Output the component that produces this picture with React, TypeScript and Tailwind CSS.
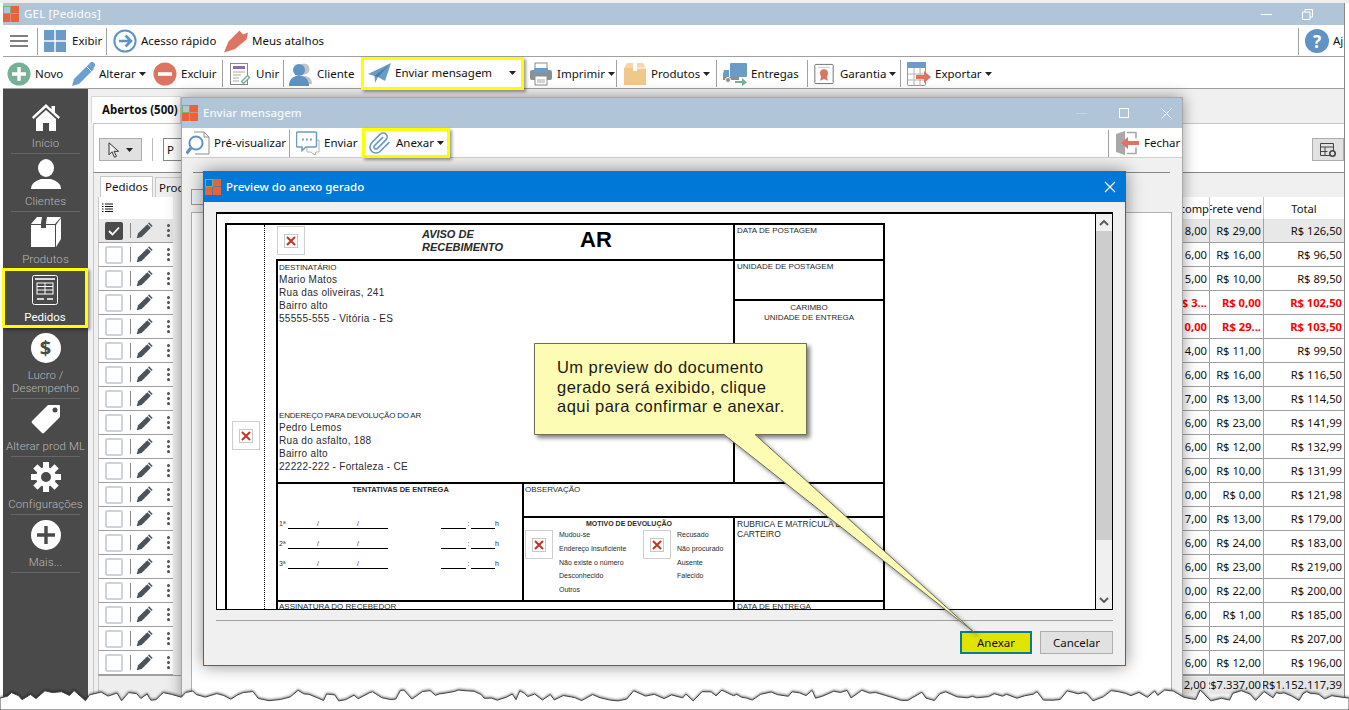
import React from "react";

const Logo = () => (
  <svg width="16" height="16" viewBox="0 0 16 16" className="shrink-0">
    <rect x="0.5" y="0.5" width="7" height="7" fill="none" stroke="#7fae7a" />
    <rect x="8" y="0" width="8" height="7.5" fill="#e8623a" />
    <rect x="0" y="8" width="7.5" height="8" fill="#e8623a" />
    <rect x="8" y="8" width="8" height="8" fill="#e8623a" />
  </svg>
);

const S = ({ children, w = 24, h = 24, cls = "" }: { children: React.ReactNode; w?: number; h?: number; cls?: string }) => (
  <svg width={w} height={h} viewBox="0 0 24 24" className={"shrink-0 " + cls}>{children}</svg>
);

const IconNovo = () => <S><circle cx="12" cy="12" r="11.5" fill="#75b295" /><path d="M12 5v14M5 12h14" stroke="#fff" strokeWidth="3.4" /></S>;
const IconExcluir = () => <S><circle cx="12" cy="12" r="11.5" fill="#dd7461" /><path d="M5 12h14" stroke="#fff" strokeWidth="3.6" /></S>;
const IconPencil = () => <S><path d="M1 24l2-7L18 2l5 5L8 22z" fill="#6a9fd2" /><path d="M18 2l1.5-1.5a2 2 0 0 1 3 0l1 1a2 2 0 0 1 0 3L22 7z" fill="#6a9fd2" /><path d="M15.5 4.5l5 5" stroke="#fff" strokeWidth="1" /></S>;
const IconUnir = () => (
  <S>
    <rect x="2.5" y="1.5" width="17" height="21" fill="#fff" stroke="#8a8a8a" />
    <rect x="5" y="4" width="12" height="3" fill="#8f6bb0" />
    <path d="M5 10h12M5 13h8M5 16h6M5 19h6" stroke="#a9a9a9" />
    <path d="M14 21l7-7" stroke="#75b295" strokeWidth="4" />
    <path d="M15 20l5-5" stroke="#fff" strokeWidth="1.4" />
  </S>
);
const IconCliente = () => (
  <S>
    <circle cx="15" cy="7" r="5.5" fill="#c4c4c4" />
    <path d="M8 22c0-6 3-8 7-8s8 2 8 8z" fill="#c4c4c4" />
    <circle cx="10" cy="8" r="6" fill="#5f93c4" />
    <path d="M0 24c0-7 4-9 7-10h6c3 1 7 3 7 10z" fill="#5f93c4" />
  </S>
);
const IconPlane = () => <S><path d="M1 13L24 2 18 20 11 16 8 22 7.5 15z" fill="#6b9bc7" /><path d="M7.5 15L22 4 11 16" fill="#447bad" /></S>;
const IconPrinter = () => (
  <S>
    <rect x="6" y="1" width="12" height="9" fill="#fff" stroke="#8c8c8c" />
    <rect x="1" y="8" width="22" height="10" rx="2" fill="#8d9092" />
    <rect x="5" y="6" width="14" height="5" rx="1" fill="#6b9bc7" />
    <rect x="6" y="14" width="12" height="9" fill="#fff" stroke="#8c8c8c" />
    <path d="M8 18h8M8 20h8" stroke="#aaa" />
  </S>
);
const IconBox = () => <S><path d="M1 6h22v17H1z" fill="#f0c88a" /><path d="M1 6l3-5h6v5zM14 6V1h6l3 5z" fill="#f5d7a6" /><path d="M10 1h4v8h-4z" fill="#fff" /><path d="M14 6h9" stroke="#fff" /></S>;
const IconTruck = () => (
  <S>
    <rect x="7" y="1" width="17" height="14" rx="1" fill="#6b9bc7" />
    <path d="M1 8h5v9H0v-5z" fill="#6b9bc7" />
    <rect x="0" y="15" width="16" height="3" fill="#8d9092" />
    <circle cx="5" cy="18" r="2.5" fill="#8d9092" stroke="#fff" />
    <path d="M12 19h7v-3l5 4.5-5 3.5v-3h-7z" fill="#75b295" />
  </S>
);
const IconGarantia = () => (
  <S w={20} h={24}>
    <rect x="1" y="0.5" width="22" height="23" rx="1" fill="#fff" stroke="#777" strokeWidth="1.2" />
    <path d="M5 4h14" stroke="#bbb" />
    <circle cx="12" cy="11" r="4.8" fill="#dd7461" />
    <path d="M8.5 14l-1 6 4.5-2 4.5 2-1-6z" fill="#dd7461" />
  </S>
);
const IconExportar = () => (
  <S>
    <rect x="0.5" y="0.5" width="18" height="23" rx="1" fill="#fff" stroke="#999" />
    <rect x="0" y="0" width="19" height="6" rx="1" fill="#6b9bc7" />
    <path d="M1 12h17M1 18h17M7 6v18M13 6v18" stroke="#b4b4b4" />
    <path d="M9 13h8V9l7 6-7 6v-4H9z" fill="#dd7461" />
  </S>
);
const IconGrid = () => <S w={22} h={22}><rect x="0" y="0" width="11.2" height="11.2" fill="#6b9bc7" /><rect x="12.8" y="0" width="11.2" height="11.2" fill="#6b9bc7" /><rect x="0" y="12.8" width="11.2" height="11.2" fill="#6b9bc7" /><rect x="12.8" y="12.8" width="11.2" height="11.2" fill="#6b9bc7" /></S>;
const IconAcesso = () => <S><circle cx="12" cy="12" r="10.6" fill="#fff" stroke="#5f93c4" strokeWidth="2" /><path d="M6 12h11M12.5 6.5L18 12l-5.5 5.5" fill="none" stroke="#5f93c4" strokeWidth="2.6" /></S>;
const IconAtalho = () => <S><path d="M0 23.5L4.500 12.500 15.500 1.500 19 5.500 24 3.500 22.500 10.500 11 20z" fill="#dd7461" /></S>;
const IconHelp = () => <S><circle cx="12" cy="12" r="12" fill="#5f93c4" /></S>;
const IconPreview = () => (
  <S>
    <path d="M8 1h10l5 5v17H9" fill="#fff" stroke="#8d8d8d" />
    <path d="M18 1v5h5" fill="none" stroke="#8d8d8d" />
    <circle cx="10" cy="12" r="6.6" fill="#fff" stroke="#5f93c4" strokeWidth="2" />
    <path d="M5 17l-4.5 5.5" stroke="#5f93c4" strokeWidth="3.2" />
  </S>
);
const IconChat = () => (
  <S>
    <path d="M11 9h12v12h-3l-1 3-4-3h-4z" fill="#fff" stroke="#b5b5b5" />
    <path d="M1.5 1h18a1 1 0 0 1 1 1v13a1 1 0 0 1-1 1H10l-4 3.5V16H1.5a1 1 0 0 1-1-1V2a1 1 0 0 1 1-1z" fill="#fff" stroke="#6b9bc7" strokeWidth="1.5" />
    <path d="M6 8.5h1.8M10 8.5h1.8M14 8.5h1.8" stroke="#6b9bc7" strokeWidth="2" />
  </S>
);
const IconClip = () => (
  <S>
    <path d="M21.4 11.05l-9.2 9.19a6 6 0 0 1-8.49-8.49l8.57-8.57A4 4 0 1 1 18 8.84l-8.59 8.57a2 2 0 0 1-2.83-2.83l8.49-8.48" fill="none" stroke="#6b9bc7" strokeWidth="1.7" />
  </S>
);
const IconFechar = () => (
  <S>
    <path d="M0 3l9-3v24l-9-3z" fill="#a8a8a8" />
    <path d="M11 1.5h9v6M20 16.5v6h-9" fill="none" stroke="#a8a8a8" strokeWidth="1.6" />
    <path d="M23 10h-11V6l-7 6 7 6v-4h11z" fill="#dd7461" />
  </S>
);

const ListPencil = () => (
  <svg width="17" height="17" viewBox="0 0 24 24" className="shrink-0">
    <path d="M1 23l2-7L16 3l5 5L8 21z" fill="#4c525b" />
    <path d="M17 2l1.5-1.5 5 5L22 7z" fill="#4c525b" />
  </svg>
);
const Dots = () => (
  <div className="flex flex-col gap-[2px] shrink-0">
    <div className="w-[3px] h-[3px] bg-[#4c525b] rounded-full" />
    <div className="w-[3px] h-[3px] bg-[#4c525b] rounded-full" />
    <div className="w-[3px] h-[3px] bg-[#4c525b] rounded-full" />
  </div>
);

const Caret = ({ cls = "ml-[3px]" }: { cls?: string }) => (
  <svg width="7" height="4" viewBox="0 0 7 4" className={"shrink-0 " + cls}><path d="M0 0h7L3.5 4z" fill="#222" /></svg>
);
const Sep = ({ cls = "mr-[6px]" }: { cls?: string }) => <div className={"w-px h-[27px] bg-[#a0a0a0] shrink-0 " + cls} />;

const Tool = ({ cls, icon, label, caret, gap = "gap-[4px]" }: { cls: string; icon: React.ReactNode; label: string; caret?: boolean; gap?: string }) => (
  <div className={"flex items-center shrink-0 " + cls}>
    <div className={"flex items-center " + gap}>
      {icon}
      <span className="whitespace-nowrap">{label}</span>
    </div>
    {caret && <Caret />}
  </div>
);

const RedX = () => (
  <div className="w-[28px] h-[29px] border border-[#cfcfcf] flex items-center justify-center bg-white shrink-0">
    <div className="w-[14px] h-[14px] border border-[#c9c9c9] flex items-center justify-center">
      <svg width="10" height="10" viewBox="0 0 10 10"><path d="M1 1l8 8M9 1l-8 8" stroke="#c8321f" strokeWidth="2" /></svg>
    </div>
  </div>
);

const rows: [string, string, string, boolean?][] = [
  ["R$ 8,00", "R$ 29,00", "R$ 126,50"],
  ["R$ 6,00", "R$ 16,00", "R$ 96,50"],
  ["R$ 5,00", "R$ 10,00", "R$ 89,50"],
  ["R$ 3...", "R$ 0,00", "R$ 102,50", true],
  ["R$ 0,00", "R$ 29...", "R$ 103,50", true],
  ["R$ 4,00", "R$ 11,00", "R$ 99,50"],
  ["R$ 6,00", "R$ 16,00", "R$ 116,50"],
  ["R$ 7,00", "R$ 13,00", "R$ 114,50"],
  ["R$ 6,00", "R$ 23,00", "R$ 141,99"],
  ["R$ 6,00", "R$ 12,00", "R$ 132,99"],
  ["R$ 6,00", "R$ 10,00", "R$ 131,99"],
  ["R$ 0,00", "R$ 0,00", "R$ 121,98"],
  ["R$ 7,00", "R$ 13,00", "R$ 179,00"],
  ["R$ 6,00", "R$ 24,00", "R$ 183,00"],
  ["R$ 6,00", "R$ 23,00", "R$ 219,00"],
  ["R$ 0,00", "R$ 22,00", "R$ 200,00"],
  ["R$ 6,00", "R$ 1,00", "R$ 185,00"],
  ["R$ 5,00", "R$ 24,00", "R$ 207,00"],
  ["R$ 6,00", "R$ 12,00", "R$ 196,00"],
];

const Nav = ({ icon, label, h = "h-[55px]" }: { icon: React.ReactNode; label: string; h?: string }) => (
  <div className={"flex flex-col items-center shrink-0 " + h}>
    <div className="h-[33px] flex items-end justify-center">{icon}</div>
    <div className="text-center leading-[13px] mt-[6px] whitespace-nowrap font-['Roboto',sans-serif] text-[11.5px] text-[#b8b8b8] font-light tracking-[0.1px]">{label}</div>
  </div>
);
const NavLine = () => <div className="h-px bg-[#666] mx-[8px] shrink-0" />;

function tornPath() {
  let d = "M0 30 L0 18";
  let seed = 7;
  let x = 0;
  while (x < 1349) {
    seed = (seed * 9301 + 49297) % 233280;
    const r = seed / 233280;
    seed = (seed * 9301 + 49297) % 233280;
    const r2 = seed / 233280;
    x += 3 + r * 9;
    const y = 10 + r2 * 11;
    d += ` L${x.toFixed(1)} ${y.toFixed(1)}`;
  }
  return d + " L1349 30 Z";
}

export default function App() {
  return (
    <div className="relative w-[1349px] h-[710px] bg-white overflow-hidden font-['Noto_Sans',sans-serif] text-[11.5px] text-[#111]">
      <div className="absolute left-0 top-0 w-full h-[3px] bg-[#eeeeee]" />
      {/* Main application window */}
      <div className="absolute left-[3px] top-[3px] w-[1342px] h-[704px] flex flex-col border-r border-[#8a8a8a] bg-[#f0f0f0]">
        <div className="h-[22px] bg-[#b0c6d8] flex items-center shrink-0 relative">
          <Logo />
          <span className="ml-[5px] text-white tracking-[0.2px]">GEL [Pedidos]</span>
          <div className="ml-auto mr-[31px] flex items-center gap-[30px]">
            <div className="w-[11px] h-px bg-white" />
            <svg width="11" height="11" viewBox="0 0 11 11"><path d="M0.5 3h7.5v7.5H0.5zM3 3V0.5h7.5V8H8" fill="none" stroke="#fff" /></svg>
          </div>
        </div>

        <div className="h-[32px] bg-white border-b border-[#a0a0a0] flex items-center shrink-0 pt-[1px]">
          <svg width="18" height="12" viewBox="0 0 18 12" className="ml-[7px] mr-[9px] shrink-0"><path d="M0 1h18M0 6h18M0 11h18" stroke="#555" strokeWidth="1.6" /></svg>
          <Sep />
          <Tool cls="w-[62px]" icon={<IconGrid />} label="Exibir" gap="gap-[6px]" />
          <Sep />
          <Tool cls="w-[111px]" icon={<IconAcesso />} label="Acesso rápido" />
          <Tool cls="w-[100px]" icon={<IconAtalho />} label="Meus atalhos" />
          <div className="ml-auto flex items-center">
            <Sep />
            <div className="relative w-[24px] h-[24px] shrink-0">
              <IconHelp />
              <span className="absolute inset-0 flex items-center justify-center text-white font-bold text-[17px] leading-none">?</span>
            </div>
            <span className="ml-[4px] w-[11px] whitespace-nowrap">Aj</span>
          </div>
        </div>

        <div className="h-[32px] bg-white border-b border-[#a0a0a0] flex items-center shrink-0 pl-[4px] pt-[2px]">
          <Tool cls="w-[64px]" icon={<IconNovo />} label="Novo" />
          <Tool cls="w-[82px]" icon={<IconPencil />} label="Alterar" caret />
          <Tool cls="w-[69px]" icon={<IconExcluir />} label="Excluir" />
          <Sep cls="mr-[5px]" />
          <Tool cls="w-[55px]" icon={<IconUnir />} label="Unir" />
          <Sep cls="mr-[5px]" />
          <Tool cls="w-[72px]" icon={<IconCliente />} label="Cliente" />
          <div className="w-[163px] h-[33px] -mt-[1px] border-[3px] border-[#ffff00] flex items-center pl-[3px] shrink-0 relative z-10 shadow-[2px_2px_3px_rgba(0,0,0,0.4)] bg-white">
            <IconPlane />
            <span className="ml-[4px] whitespace-nowrap">Enviar mensagem</span>
            <Caret cls="ml-[17px]" />
          </div>
          <Tool cls="w-[87px] ml-[5px]" icon={<IconPrinter />} label="Imprimir" caret />
          <Sep />
          <Tool cls="w-[93px]" icon={<IconBox />} label="Produtos" caret />
          <Sep />
          <Tool cls="w-[84px]" icon={<IconTruck />} label="Entregas" />
          <Sep />
          <Tool cls="w-[86px]" icon={<IconGarantia />} label="Garantia" caret gap="gap-[6px]" />
          <Sep />
          <Tool cls="w-[90px]" icon={<IconExportar />} label="Exportar" caret />
        </div>

        <div className="flex-1 flex min-h-0">
          {/* Sidebar */}
          <div className="w-[85px] bg-[#4a4a4a] flex flex-col shrink-0 pt-[9px]">
            <Nav label="Início" icon={
              <svg width="28" height="28" viewBox="0 0 28 28"><path d="M14 1L0 14l1.5 2L14 4.5 26.500 16l1.500-2-5-4.500V3h-3.500v3.300z" fill="#fff" /><path d="M14 7L4 16v12h7v-8h6v8h7V16z" fill="#fff" /></svg>
            } />
            <NavLine />
            <div className="h-[2px]" />
            <Nav label="Clientes" icon={
              <svg width="30" height="30" viewBox="0 0 30 30"><ellipse cx="15" cy="9" rx="8" ry="9" fill="#fff" /><path d="M0 30c0-6 5-8 10-10h10c5 2 10 4 10 10z" fill="#fff" /></svg>
            } />
            <NavLine />
            <div className="h-[2px]" />
            <Nav h="h-[54px]" label="Produtos" icon={
              <svg width="30" height="30" viewBox="0 0 30 30"><path d="M0 8h24v22H0z" fill="#fff" /><path d="M0 7l6-7h24l-6 7z" fill="#fff" /><path d="M25 8l5-7v21l-5 8z" fill="#fff" /><path d="M11 0h5l-1 6v5h-5V6z" fill="#4a4a4a" /></svg>
            } />
            <div className="relative z-10 -ml-[1px] w-[86px] h-[60px] border-[3px] border-[#ffff00] flex flex-col items-center shrink-0 shadow-[2px_2px_3px_rgba(0,0,0,0.4)]">
              <div className="mt-[4px] h-[30px]">
                <svg width="26" height="30" viewBox="0 0 26 30">
                  <rect x="0.500" y="0.500" width="25" height="29" rx="2" fill="none" stroke="#fff" />
                  <path d="M3 4h20" stroke="#fff" strokeWidth="1.6" />
                  <rect x="5" y="8" width="16" height="11" fill="none" stroke="#fff" />
                  <path d="M5 11.500h16M5 15h16M13 8v11" stroke="#fff" />
                  <path d="M5 24h7M15 24h6" stroke="#fff" strokeWidth="1.500" />
                </svg>
              </div>
              <div className="mt-[5px] text-white leading-[15px] font-['Roboto',sans-serif]">Pedidos</div>
            </div>
            <div className="h-[5px]" />
            <div className="flex flex-col items-center shrink-0 h-[65px]">
              <div className="w-[30px] h-[30px] rounded-full bg-white flex items-center justify-center text-[#4a4a4a] font-bold text-[20px] leading-none">$</div>
              <div className="mt-[6px] text-center leading-[13px] text-[#b8b8b8] font-['Roboto',sans-serif] font-light">Lucro /<br />Desempenho</div>
            </div>
            <NavLine />
            <div className="h-[2px]" />
            <Nav label="Alterar prod ML" icon={
              <svg width="30" height="30" viewBox="0 0 30 30"><path d="M17 1h11a1 1 0 0 1 1 1v11L13 29a1.500 1.500 0 0 1-2 0L1 19a1.500 1.500 0 0 1 0-2z" fill="#fff" /><circle cx="24" cy="6" r="2.500" fill="#4a4a4a" /></svg>
            } />
            <NavLine />
            <div className="h-[2px]" />
            <Nav label="Configurações" icon={
              <svg width="30" height="30" viewBox="0 0 30 30">
                <g fill="#fff">
                  <circle cx="15" cy="15" r="10" />
                  <rect x="12" y="0" width="6" height="30" />
                  <rect x="12" y="0" width="6" height="30" transform="rotate(45 15 15)" />
                  <rect x="12" y="0" width="6" height="30" transform="rotate(90 15 15)" />
                  <rect x="12" y="0" width="6" height="30" transform="rotate(135 15 15)" />
                </g>
                <circle cx="15" cy="15" r="5" fill="#4a4a4a" />
              </svg>
            } />
            <NavLine />
            <div className="h-[2px]" />
            <Nav label="Mais..." icon={
              <svg width="30" height="30" viewBox="0 0 30 30"><circle cx="15" cy="15" r="15" fill="#fff" /><path d="M15 6v18M6 15h18" stroke="#4a4a4a" strokeWidth="3.400" /></svg>
            } />
            <NavLine />
          </div>

          {/* Content */}
          <div className="flex-1 min-w-0 flex flex-col pl-[5px]">
            <div className="h-[35px] flex items-end border-b border-[#c8c8c8] shrink-0">
              <div className="ml-[-2px] w-[90px] h-[27px] bg-white flex items-center pl-[10px] font-bold whitespace-nowrap overflow-hidden border border-b-0 border-[#d8d8d8]">Abertos (500)</div>
            </div>
            <div className="h-[49px] bg-white border-b border-[#888] flex items-start shrink-0 border-l border-l-[#c8c8c8] pt-[14px]">
              <div className="ml-[5px] w-[43px] h-[23px] bg-[#e1e1e1] border border-[#adadad] flex items-center justify-center gap-[5px] shrink-0">
                <svg width="13" height="16" viewBox="0 0 13 16"><path d="M1 0.800v12l3-3 2.500 5.500 2-1-2.500-5h4.500z" fill="#eee" stroke="#333" /></svg>
                <Caret cls="" />
              </div>
              <div className="ml-[10px] w-px h-[23px] bg-[#bbb]" />
              <div className="ml-[10px] w-[40px] h-[23px] border border-[#888] pl-[3px] flex items-center">P</div>
              <div className="ml-auto w-[32px] h-[23px] bg-[#e1e1e1] border border-[#adadad] flex items-center justify-center">
                <svg width="18" height="16" viewBox="0 0 18 16"><path d="M1.500 1.500h13v12h-13zM1.500 5h13M1.500 9.500h7M6 5v8.500" fill="none" stroke="#444" /><circle cx="13.500" cy="11.500" r="2.700" fill="#e1e1e1" stroke="#444" strokeWidth="1.600" /></svg>
              </div>
            </div>
            <div className="h-[24px] flex items-end shrink-0 border-l border-[#c8c8c8] pl-[6px] gap-[2px]">
              <div className="w-[53px] h-[21px] bg-white border border-b-0 border-[#c8c8c8] flex items-center justify-center">Pedidos</div>
              <div className="w-[40px] h-[20px] bg-[#f0f0f0] border border-b-0 border-[#c8c8c8] pl-[3px] flex items-center">Produtos</div>
            </div>
            <div className="flex-1 min-h-0 flex flex-col border-l border-[#c8c8c8] pl-[4px]">
              <div className="h-[22px] bg-white flex shrink-0">
                <div className="w-[75px] bg-white border-l border-[#c8c8c8] flex items-center pl-[3px] shrink-0">
                  <svg width="11" height="10" viewBox="0 0 11 10"><path d="M0 1h1.500M3 1h8M0 3.500h1.500M3 3.500h8M0 6h1.500M3 6h8M0 8.500h1.500M3 8.500h8" stroke="#111" /></svg>
                </div>
                <div className="flex-1 bg-[#f0f0f0]" />
                <div className="w-[60px] bg-white flex justify-end overflow-hidden whitespace-nowrap leading-[24px] text-[11.2px]">Frete comp</div>
                <div className="w-[54px] bg-white border-l border-[#c8c8c8] flex justify-end pr-[1px] overflow-hidden whitespace-nowrap leading-[24px] text-[11.2px]">Frete vend</div>
                <div className="w-[81px] bg-white border-l border-[#c8c8c8] text-center leading-[24px] text-[11.2px]">Total</div>
              </div>
              {rows.map((r, i) => (
                <div key={i} className="h-[24px] flex shrink-0">
                  <div className={"w-[75px] flex items-center border-l border-b border-[#c8c8c8] border-b-[#a0a0a0] pl-[6px] shrink-0 " + (i === 0 ? "bg-[#e8e8e8]" : "bg-white")}>
                    {i === 0 ? (
                      <div className="w-[18px] h-[18px] bg-[#4a4a4a] rounded-[2px] flex items-center justify-center shrink-0">
                        <svg width="12" height="10" viewBox="0 0 12 10"><path d="M1 5l3.500 3.500L11 1.500" fill="none" stroke="#fff" strokeWidth="1.800" /></svg>
                      </div>
                    ) : (
                      <div className="w-[18px] h-[18px] bg-white border-2 border-[#ced2dc] rounded-[2px] shrink-0" />
                    )}
                    <div className="ml-[7px] w-px h-[15px] bg-[#888] shrink-0" />
                    <div className="ml-[5px]"><ListPencil /></div>
                    <div className="ml-[14px]"><Dots /></div>
                  </div>
                  <div className="flex-1 bg-[#f0f0f0]" />
                  <div className={"flex text-[11.2px] leading-[23px] border-b border-[#a0a0a0] " + (i === 0 ? "bg-[#e8e8e8] " : "bg-white ") + (r[3] ? "text-[#ff0000] font-bold" : "text-[#111]")}>
                    <div className="w-[60px] text-right pr-[2px] whitespace-nowrap overflow-hidden">{r[0]}</div>
                    <div className="w-[54px] border-l border-[#a0a0a0] text-right pr-[2px] whitespace-nowrap overflow-hidden">{r[1]}</div>
                    <div className="w-[81px] border-l border-[#a0a0a0] text-right pr-[2px] whitespace-nowrap overflow-hidden">{r[2]}</div>
                  </div>
                </div>
              ))}
              <div className="h-[20px] flex shrink-0 border-t border-[#a0a0a0]">
                <div className="w-[75px] bg-[#eeeeee] border-l border-[#c8c8c8] shrink-0" />
                <div className="flex-1" />
                <div className="flex bg-[#f0f0f0] leading-[16px] text-[11.2px] pt-[1px]">
                  <div className="w-[60px] h-[17px] bg-[#e6e6e6] mr-px flex justify-end pr-[2px] whitespace-nowrap overflow-hidden">R$ 2,00</div>
                  <div className="w-[53px] h-[17px] bg-[#e6e6e6] mr-px flex justify-end pr-[1px] whitespace-nowrap overflow-hidden">R$7.337,00</div>
                  <div className="w-[81px] h-[17px] bg-[#e6e6e6] flex justify-end pr-[2px] whitespace-nowrap overflow-hidden">R$1.152.117,39</div>
                </div>
              </div>
            </div>
          </div>
        </div>
      </div>

      {/* Enviar mensagem window */}
      <div className="absolute left-[181px] top-[97px] w-[1002px] h-[606px] flex flex-col bg-[#f0f0f0] border border-[#a8a8a8] shadow-[0_0_14px_rgba(0,0,0,0.4)]">
        <div className="h-[30px] bg-[#b0c6d8] flex items-center shrink-0">
          <Logo />
          <span className="ml-[5px] text-[#f4f7fa] font-medium">Enviar mensagem</span>
          <div className="ml-auto mr-[10px] flex items-center gap-[32px]">
            <div className="w-[11px] h-px bg-[#c4d4e1]" />
            <div className="w-[10px] h-[10px] border border-white" />
            <svg width="11" height="11" viewBox="0 0 11 11"><path d="M0.500 0.500l10 10M10.500 0.500l-10 10" stroke="#fff" /></svg>
          </div>
        </div>
        <div className="h-[30px] bg-white border-b border-[#d0d0d0] flex items-center shrink-0 pl-[4px] pt-[1px]">
          <Tool cls="w-[103px]" icon={<IconPreview />} label="Pré-visualizar" />
          <Sep />
          <Tool cls="w-[66px]" icon={<IconChat />} label="Enviar" />
          <div className="w-[88px] h-[30px] border-[3px] border-[#ffff00] flex items-center pl-[3px] shrink-0 shadow-[2px_2px_3px_rgba(0,0,0,0.4)]">
            <IconClip />
            <span className="ml-[4px]">Anexar</span>
            <Caret />
          </div>
          <div className="ml-auto flex items-center">
            <Sep cls="mr-[7px]" />
            <Tool cls="w-[66px]" icon={<IconFechar />} label="Fechar" />
          </div>
        </div>
        <div className="flex-1 min-h-0 flex flex-col pl-[9px] pr-[10px]">
          <div className="h-[15px] border-b border-[#888] shrink-0 mx-[2px]" />
          <div className="h-[16px] w-[12px] mt-[16px] border border-[#999] border-r-0 shrink-0" />
          <div className="mt-[7px] flex-1 bg-white border border-[#b0b0b0]" />
        </div>
      </div>

      {/* Preview window */}
      <div className="absolute left-[203px] top-[171px] w-[923px] h-[495px] flex flex-col bg-[#f0f0f0] border border-[#0078d7] shadow-[0_0_16px_rgba(0,0,0,0.45)]">
        <div className="h-[30px] bg-[#0078d7] flex items-center shrink-0 pl-[1px]">
          <Logo />
          <span className="ml-[5px] text-white font-medium">Preview do anexo gerado</span>
          <svg width="12" height="12" viewBox="0 0 12 12" className="ml-auto mr-[9px]"><path d="M1 1l10 10M11 1L1 11" stroke="#fff" strokeWidth="1.200" /></svg>
        </div>
        <div className="flex-1 min-h-0 flex flex-col px-[12px] pt-[10px]">
          <div className="h-[398px] flex border border-t-2 border-black overflow-hidden shrink-0 bg-white">
            <div className="flex-1 min-w-0 overflow-hidden pl-[8px] pt-[9px]">
              <div className="flex w-[660px] border-t-2 border-black font-['Liberation_Sans',sans-serif] text-[#2a2a2a]">
                <div className="w-[51px] shrink-0 h-[400px] border-l-2 border-black flex">
                  <div className="w-[38px] border-r border-dotted border-black pl-[5px] pt-[196px] shrink-0"><RedX /></div>
                </div>
                <div className="w-[609px] grid grid-cols-[248px_211px_150px] grid-rows-[36px_40px_183px_34px_84px_40px]">
                  <div className="col-span-2 border-b-2 border-r-2 border-black flex relative pl-[1px] pt-[1px]">
                    <RedX />
                    <div className="ml-[117px] mt-[2px] font-bold italic text-[11px] leading-[13px]">AVISO DE<br />RECEBIMENTO</div>
                    <div className="ml-[77px] mt-[1px] font-bold text-[22px] leading-[26px] text-black">AR</div>
                  </div>
                  <div className="border-b-2 border-r-2 border-black pl-[2px] text-[8px] leading-[12px]">DATA DE POSTAGEM</div>
                  <div className="col-span-2 row-span-2 border-b-2 border-r-2 border-l-2 border-black pl-[1px] pt-[2px] flex flex-col">
                    <div className="text-[8px] leading-[10px] tracking-[-0.1px]">DESTINATÁRIO</div>
                    <div className="text-[10px] leading-[13px] tracking-[0.3px]">Mario Matos<br />Rua das oliveiras, 241<br />Bairro alto<br />55555-555 - Vitória - ES</div>
                    <div className="mt-[86px] text-[8px] leading-[10px] tracking-[-0.2px]">ENDEREÇO PARA DEVOLUÇÃO DO AR</div>
                    <div className="text-[10px] leading-[13px] tracking-[0.3px]">Pedro Lemos<br />Rua do asfalto, 188<br />Bairro alto<br />22222-222 - Fortaleza - CE</div>
                  </div>
                  <div className="border-b-2 border-r-2 border-black pl-[2px] text-[8px] leading-[12px]">UNIDADE DE POSTAGEM</div>
                  <div className="border-b-2 border-r-2 border-black text-center text-[8px] leading-[10px] pt-[2px]">CARIMBO<br />UNIDADE DE ENTREGA</div>
                  <div className="row-span-2 border-b-2 border-r-2 border-l-2 border-black flex flex-col pl-[1px]">
                    <div className="text-center font-bold text-[7.5px] leading-[10px] mt-[1px]">TENTATIVAS DE ENTREGA</div>
                    {["1ª", "2ª", "3ª"].map((n, i) => (
                      <div key={n} className={"flex items-end h-[20px] text-[7px] leading-[10px] " + (i === 0 ? "mt-[14px]" : "")}>
                        <span className="w-[9px] shrink-0">{n}</span>
                        <div className="w-[100px] border-b border-black flex justify-around pl-[10px] pr-[10px] h-[10px]"><span>/</span><span>/</span></div>
                        <div className="ml-[53px] w-[25px] border-b border-black h-[10px]" />
                        <span className="w-[5px] text-center">:</span>
                        <div className="w-[24px] border-b border-black h-[10px]" />
                        <span>h</span>
                      </div>
                    ))}
                  </div>
                  <div className="col-span-2 border-b-2 border-r-2 border-black pl-[1px] pt-[1px] text-[8px] leading-[10px]">OBSERVAÇÃO</div>
                  <div className="border-b-2 border-r-2 border-black flex flex-col relative pl-[1px]">
                    <div className="text-center font-bold text-[7px] leading-[10px] mt-[1px]">MOTIVO DE DEVOLUÇÃO</div>
                    <div className="flex text-[7px]">
                      <div className="mt-[1px]"><RedX /></div>
                      <div className="ml-[6px] leading-[13.800px] w-[84px] shrink-0 -mt-[1px]">
                        Mudou-se<br />Endereço Insuficiente<br />Não existe o número<br />Desconhecido<br />Outros
                      </div>
                      <div className="mt-[1px]"><RedX /></div>
                      <div className="ml-[6px] leading-[13.800px] -mt-[1px] whitespace-nowrap">
                        Recusado<br />Não procurado<br />Ausente<br />Falecido
                      </div>
                    </div>
                  </div>
                  <div className="border-b-2 border-r-2 border-black pl-[2px] pt-[1px] text-[8.500px] leading-[10px]">RUBRICA E MATRÍCULA DO<br />CARTEIRO</div>
                  <div className="col-span-2 border-r-2 border-l-2 border-black pl-[1px] text-[8px] leading-[10px]">ASSINATURA DO RECEBEDOR</div>
                  <div className="border-r-2 border-black pl-[2px] text-[8px] leading-[10px]">DATA DE ENTREGA</div>
                </div>
              </div>
            </div>
            <div className="w-[17px] shrink-0 bg-[#f0f0f0] flex flex-col items-center border-l border-black">
              <svg width="10" height="6" viewBox="0 0 10 6" className="mt-[6px]"><path d="M1 5l4-4 4 4" fill="none" stroke="#555" strokeWidth="1.800" /></svg>
              <div className="w-full h-[309px] bg-[#cdcdcd] mt-[5px]" />
              <svg width="10" height="6" viewBox="0 0 10 6" className="mt-auto mb-[6px]"><path d="M1 1l4 4 4-4" fill="none" stroke="#555" strokeWidth="1.800" /></svg>
            </div>
          </div>
          <div className="h-px bg-[#a0a0a0] mt-[10px] shrink-0" />
          <div className="flex justify-end gap-[8px] mt-[10px]">
            <div className="w-[72px] h-[23px] bg-[#e3e300] border-2 border-[#0a7d8a] flex items-center justify-center">Anexar</div>
            <div className="w-[73px] h-[23px] bg-[#e1e1e1] border border-[#adadad] flex items-center justify-center">Cancelar</div>
          </div>
        </div>
      </div>

      {/* Callout */}
      <svg width="460" height="310" viewBox="0 0 460 310" className="absolute left-[530px] top-[338px] drop-shadow-[3px_3px_2px_rgba(0,0,0,0.5)]">
        <path d="M4.500 5.500H276.500V96.500H225L445 295 194 96.500H4.500z" fill="#fdfcb4" stroke="#6e6e5a" />
      </svg>
      <div className="absolute left-[557px] top-[358px] font-['Liberation_Sans',sans-serif] text-[16.500px] leading-[19.500px] tracking-[0.45px] text-[#1a1a1a]">
        Um preview do documento<br />gerado será exibido, clique<br />aqui para confirmar e anexar.
      </div>

      {/* Torn paper edge */}
      <svg width="1349" height="30" viewBox="0 0 1349 30" className="absolute left-0 top-[680px] drop-shadow-[0_-1px_1px_rgba(0,0,0,0.45)]">
        <path d={tornPath()} fill="#fff" stroke="#444" strokeWidth="1" />
      </svg>
    </div>
  );
}
